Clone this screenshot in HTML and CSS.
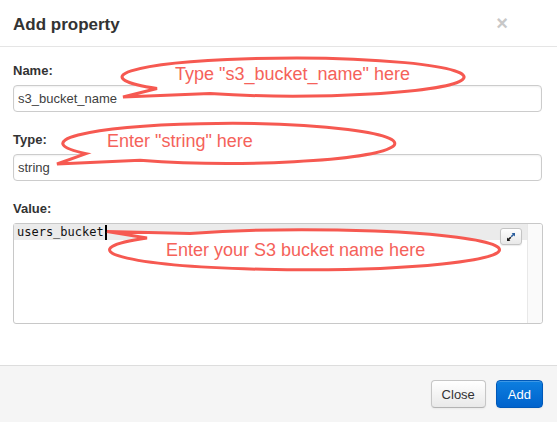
FILE: index.html
```html
<!DOCTYPE html>
<html>
<head>
<meta charset="utf-8">
<link rel="stylesheet" href="styles.css">
</head>
<body>
<div class="modal">
  <div class="modal-header">
    <h3 class="title">Add property</h3>
    <span class="close">×</span>
  </div>
  <div class="modal-body">
    <div class="field">
      <label class="label">Name:</label>
      <div class="input">s3_bucket_name</div>
    </div>
    <div class="field">
      <label class="label">Type:</label>
      <div class="input">string</div>
    </div>
    <div class="field">
      <label class="label">Value:</label>
      <div class="editor">
        <div class="lines">
          <div class="line active"><span>users_bucket</span><span class="cursor"></span></div>
        </div>
        <div class="scroll"></div>
        <span class="expand">
          <svg width="10" height="10" viewBox="0 0 10 10">
            <path d="M1.5 8.5 L4.8 5.2" stroke="#1a1a1a" stroke-width="1.6"/>
            <path d="M1 9 L1 5.6 L4.4 9 Z" fill="#1a1a1a"/>
            <path d="M5.2 4.8 L8.5 1.5" stroke="#2b5f9e" stroke-width="1.6"/>
            <path d="M9 1 L9 4.4 L5.6 1 Z" fill="#2b5f9e"/>
          </svg>
        </span>
      </div>
    </div>
  </div>
  <div class="modal-footer">
    <button class="btn">Close</button>
    <button class="btn primary">Add</button>
  </div>
  <svg class="notes" width="557" height="422" viewBox="0 0 557 422">
    <path class="bubble" d="M157 88.5 L123 97 L210 93.6 A171 19 0 1 0 157 88.5 Z"/>
    <text class="note" x="175" y="80">Type "s3_bucket_name" here</text>
    <path class="bubble" d="M86 153.6 L57 164 L140 160.3 A166 20 0 1 0 86 153.6 Z"/>
    <text class="note" x="107" y="147">Enter "string" here</text>
    <path class="bubble" d="M147 238 L107 231.5 L190 233.6 A195 20 0 1 1 147 238 Z"/>
    <text class="note" x="166" y="256">Enter your S3 bucket name here</text>
  </svg>
</div>
</body>
</html>
```

FILE: styles.css
```css
html, body {
  margin: 0;
  padding: 0;
  background: #fff;
}
body {
  font-family: "Liberation Sans", Arial, sans-serif;
  color: #333;
}
.modal {
  position: relative;
  width: 557px;
  height: 422px;
  display: flex;
  flex-direction: column;
  overflow: hidden;
}
.modal-header {
  display: flex;
  align-items: baseline;
  justify-content: space-between;
  padding: 13px 49px 11px 13px;
  border-bottom: 1px solid #e5e5e5;
}
.title {
  margin: 0;
  font-size: 17px;
  line-height: 20px;
  font-weight: bold;
  color: #333;
}
.close {
  font-size: 20px;
  line-height: 20px;
  font-weight: bold;
  color: #c8c8c8;
}
.modal-body {
  padding: 15px 15px 0 13px;
}
.field {
  margin-bottom: 19px;
}
.label {
  display: block;
  font-size: 13px;
  line-height: 18px;
  font-weight: bold;
  color: #333;
  margin-bottom: 5px;
}
.input {
  height: 25px;
  line-height: 25px;
  border: 1px solid #ccc;
  border-radius: 4px;
  padding: 0 4px;
  font-size: 13px;
  color: #404040;
  box-shadow: inset 0 1px 2px rgba(0,0,0,0.06);
}
.editor {
  position: relative;
  height: 99px;
  border: 1px solid #c8c8c8;
  border-radius: 3px;
  display: flex;
  margin-right: -1px;
  margin-top: 1px;
}
.lines {
  flex: 1;
}
.line {
  height: 16px;
  line-height: 16px;
  padding-left: 3px;
  font-family: "DejaVu Sans Mono", monospace;
  font-size: 12px;
  color: #111;
  display: flex;
  align-items: center;
}
.line.active {
  background: #ebebeb;
}
.cursor {
  display: inline-block;
  width: 2px;
  height: 15px;
  background: #000;
  margin-left: 1px;
}
.scroll {
  width: 14px;
  background: #fafafa;
  border-left: 1px solid #e8e8e8;
  border-radius: 0 3px 3px 0;
}
.expand {
  position: absolute;
  top: 4px;
  right: 20px;
  width: 20px;
  height: 15px;
  border: 1px solid #c4c4c4;
  border-radius: 3px;
  background: linear-gradient(#fff, #e8e8e8);
  box-shadow: 0 1px 1px rgba(0,0,0,0.08);
  display: flex;
  align-items: center;
  justify-content: center;
}
.modal-footer {
  margin-top: auto;
  height: 28px;
  padding: 14px 14px 14px 0;
  border-top: 1px solid #ddd;
  background: #f5f5f5;
  display: flex;
  justify-content: flex-end;
  gap: 10px;
}
.btn {
  height: 28px;
  padding: 0 10px;
  font-family: "Liberation Sans", Arial, sans-serif;
  font-size: 13px;
  color: #333;
  border: 1px solid #c6c6c6;
  border-bottom-color: #b3b3b3;
  border-radius: 4px;
  background: linear-gradient(#ffffff, #e9e9e9);
  box-shadow: inset 0 1px 0 rgba(255,255,255,0.2), 0 1px 2px rgba(0,0,0,0.05);
}
.btn.primary {
  color: #fff;
  padding: 0 11px;
  border-color: #0058b8;
  background: linear-gradient(#0d7fe0, #0062cc);
}
.notes {
  position: absolute;
  top: 0;
  left: 0;
  pointer-events: none;
}
.bubble {
  fill: #fff;
  stroke: #f65951;
  stroke-width: 3;
  stroke-linejoin: miter;
}
.note {
  font-family: "Liberation Sans", Arial, sans-serif;
  font-size: 18px;
  fill: #f5625a;
}
```
